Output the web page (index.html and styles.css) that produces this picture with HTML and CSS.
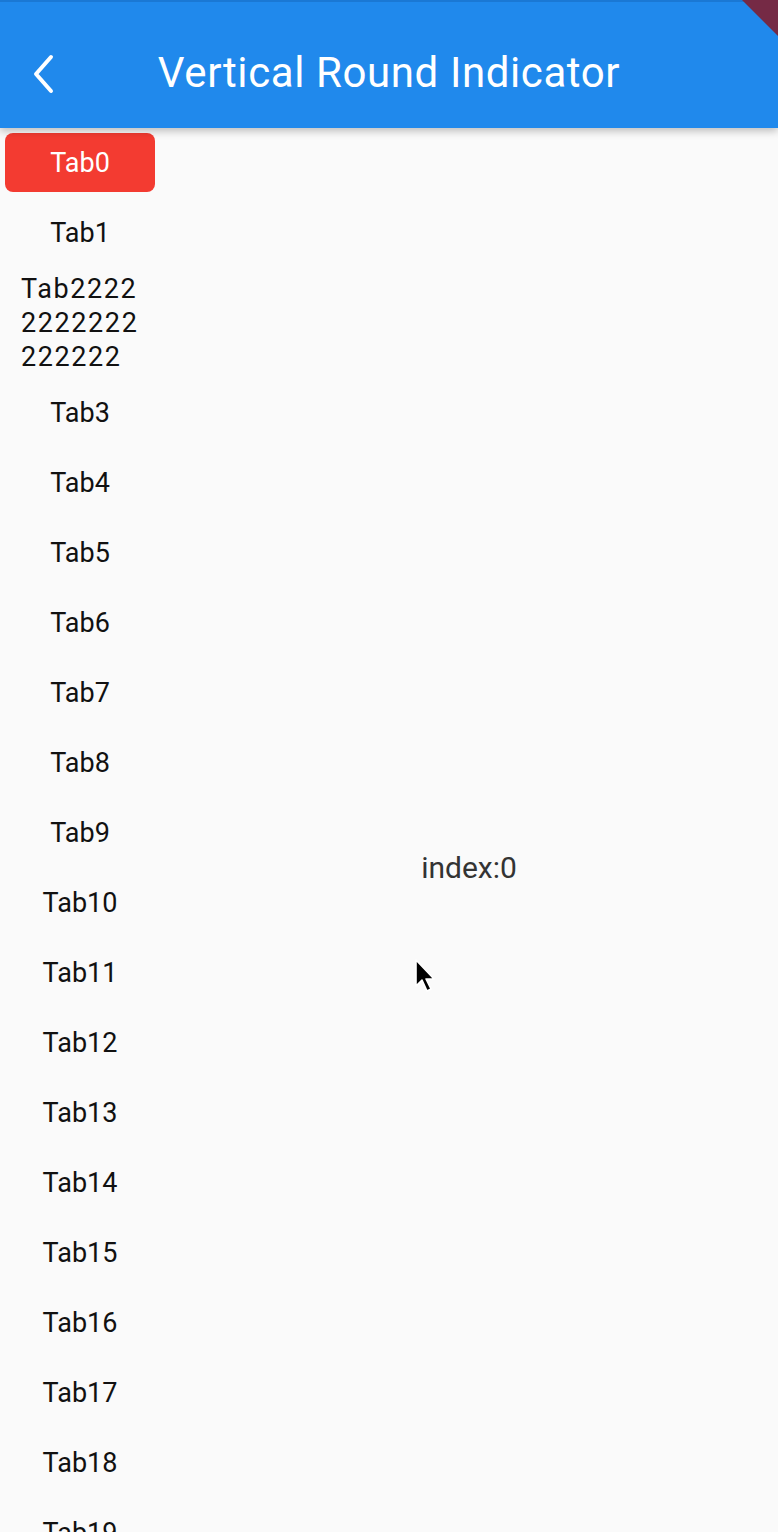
FILE: index.html
```html
<!DOCTYPE html>
<html>
<head>
<meta charset="utf-8">
<link rel="stylesheet" href="styles.css">
</head>
<body>
<div class="screen">
  <header class="appbar">
    <svg class="back" width="30" height="40" viewBox="0 0 30 40"><path d="M22 3 L7 20 L22 37" fill="none" stroke="#fff" stroke-width="4" stroke-linecap="round" stroke-linejoin="round"/></svg>
    <h1 class="title">Vertical Round Indicator</h1>
  </header>
  <div class="banner"></div>
  <div class="body">
    <nav class="tabs">
      <div class="tab active"><span>Tab0</span></div>
      <div class="tab"><span>Tab1</span></div>
      <div class="tab tall"><span>Tab2222<br>2222222<br>222222</span></div>
      <div class="tab"><span>Tab3</span></div>
      <div class="tab"><span>Tab4</span></div>
      <div class="tab"><span>Tab5</span></div>
      <div class="tab"><span>Tab6</span></div>
      <div class="tab"><span>Tab7</span></div>
      <div class="tab"><span>Tab8</span></div>
      <div class="tab"><span>Tab9</span></div>
      <div class="tab"><span>Tab10</span></div>
      <div class="tab"><span>Tab11</span></div>
      <div class="tab"><span>Tab12</span></div>
      <div class="tab"><span>Tab13</span></div>
      <div class="tab"><span>Tab14</span></div>
      <div class="tab"><span>Tab15</span></div>
      <div class="tab"><span>Tab16</span></div>
      <div class="tab"><span>Tab17</span></div>
      <div class="tab"><span>Tab18</span></div>
      <div class="tab"><span>Tab19</span></div>
    </nav>
    <main class="content">
      <p class="index">index:0</p>
    </main>
  </div>
  <svg class="cursor" width="26" height="38" viewBox="0 0 26 38"><path d="M2 2 L2 28 L8 22 L13 33 L17 31 L12 21 L20 21 Z" fill="#000" stroke="#fff" stroke-width="1.6" stroke-linejoin="round"/></svg>
</div>
</body>
</html>
```
FILE: styles.css
```css
html, body {
  margin: 0;
  padding: 0;
}
body {
  width: 778px;
  height: 1532px;
  overflow: hidden;
  background: #fafafa;
  font-family: Roboto, "Liberation Sans", sans-serif;
}
.screen {
  position: relative;
  width: 778px;
  height: 1532px;
  overflow: hidden;
  display: flex;
  flex-direction: column;
}
.appbar {
  position: relative;
  z-index: 2;
  height: 128px;
  flex: none;
  background: #2089ec;
  border-top: 2px solid #1a78d4;
  box-sizing: border-box;
  padding-top: 16px;
  display: flex;
  align-items: center;
  justify-content: center;
  box-shadow: 0 3px 8px rgba(0,0,0,0.25);
}
.back {
  position: absolute;
  left: 29px;
  top: 52px;
}
.title {
  margin: 0;
  color: #fff;
  font-size: 42px;
  font-weight: 400;
  letter-spacing: 0.6px;
  line-height: 50px;
}
.banner {
  position: absolute;
  z-index: 3;
  right: 0;
  top: 0;
  width: 36px;
  height: 36px;
  background: #752a45;
  clip-path: polygon(0 0, 100% 0, 100% 100%);
  filter: blur(0.6px);
}
.body {
  flex: 1;
  display: flex;
  min-height: 0;
}
.tabs {
  width: 160px;
  flex: none;
  display: flex;
  flex-direction: column;
}
.tab {
  min-height: 70px;
  flex: none;
  display: flex;
  align-items: center;
  justify-content: center;
  font-size: 27px;
  color: #111;
  box-sizing: border-box;
  padding-top: 1px;
}
.tab span {
  line-height: 34px;
}
.tab.active {
  margin: 5px;
  min-height: 59px;
  background: #f33b31;
  border-radius: 8px;
  color: #fff;
}
.tab.tall {
  min-height: 110px;
  justify-content: flex-start;
  padding-left: 21px;
  letter-spacing: 1.6px;
}
.content {
  flex: 1;
  display: flex;
  justify-content: center;
  align-items: flex-start;
}
.index {
  margin: 0;
  margin-top: 722px;
  font-size: 30px;
  line-height: 36px;
  color: #333;
}
.cursor {
  position: absolute;
  left: 414px;
  top: 958px;
  z-index: 4;
}
```
